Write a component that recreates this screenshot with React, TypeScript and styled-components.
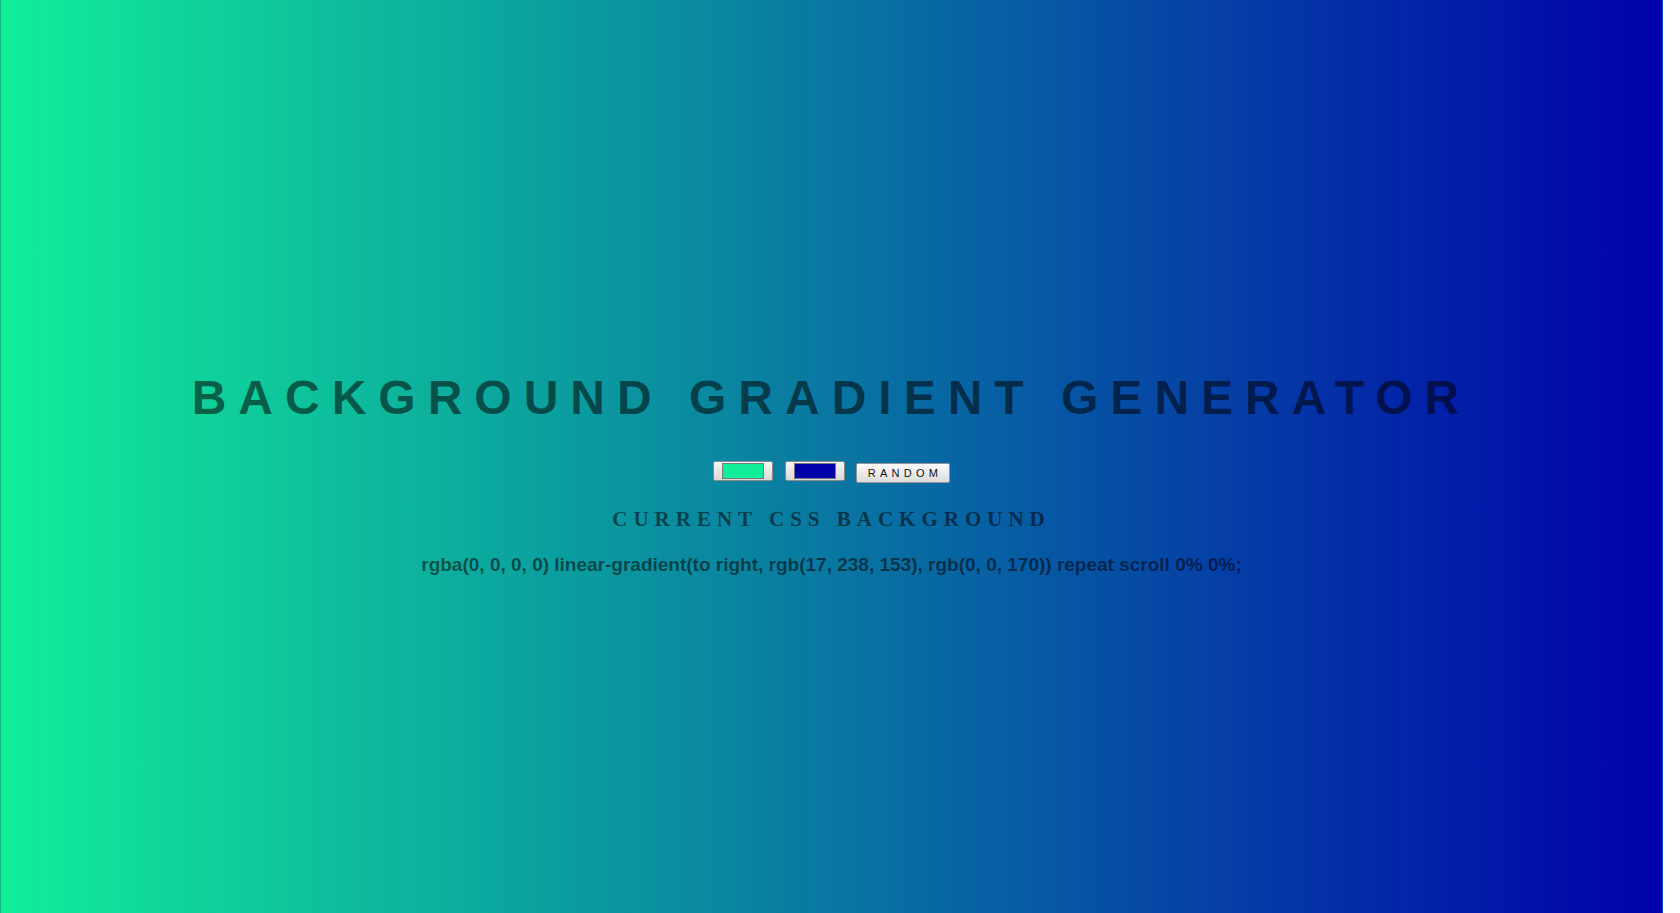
import React, { useState } from "react";
import styled, { createGlobalStyle } from "styled-components";

const GlobalStyle = createGlobalStyle`
  html, body {
    margin: 0;
    padding: 0;
    background: #ffffff;
    overflow: hidden;
  }
  * { box-sizing: border-box; }
`;

const Page = styled.main<{ $from: string; $to: string }>`
  width: calc(100vw - 17px);
  height: 913px;
  padding-top: 370px;
  border-left: 1px solid rgb(18, 184, 140);
  border-right: 1px solid rgb(10, 60, 200);
  background: linear-gradient(to right, ${(p) => p.$from}, ${(p) => p.$to});
  display: flex;
  flex-direction: column;
  align-items: center;
  color: rgba(0, 0, 0, 0.55);
`;

const Title = styled.h1`
  margin: 0;
  font-family: "Liberation Sans", Arial, sans-serif;
  font-weight: 700;
  font-size: 48px;
  line-height: 56px;
  letter-spacing: 12px;
  text-align: center;
`;

const Controls = styled.div`
  margin-top: 35px;
  display: flex;
  align-items: flex-start;
  gap: 12px;
`;

const ColorInput = styled.input`
  width: 60px;
  height: 20px;
  margin: 0;
  padding: 1px 8px;
  border: 1px solid #8a8a8a;
  border-radius: 2px;
  background: linear-gradient(#f7f7f7, #d9d9d9);
  cursor: pointer;

  &::-webkit-color-swatch-wrapper {
    padding: 0;
  }
  &::-webkit-color-swatch {
    border: 1px solid #7a7a7a;
    border-radius: 0;
  }
`;

const RandomButton = styled.button`
  margin: 2px 0 0 -1px;
  width: 94px;
  height: 20px;
  padding: 0 0 0 4px;
  border: 1px solid #959595;
  border-radius: 2px;
  background: linear-gradient(#fbfbfb, #dcdcdc);
  font-family: "Liberation Sans", Arial, sans-serif;
  font-size: 11px;
  letter-spacing: 4.3px;
  color: #111;
  cursor: pointer;
`;

const Subtitle = styled.h3`
  margin: 24px 0 0;
  font-family: "Liberation Serif", "Times New Roman", serif;
  font-weight: 700;
  font-size: 21px;
  line-height: 24px;
  letter-spacing: 6px;
  text-align: center;
`;

const CssText = styled.p`
  margin: 22px 0 0;
  font-family: "Liberation Sans", Arial, sans-serif;
  font-weight: 700;
  font-size: 19px;
  line-height: 24px;
  text-align: center;
`;

const hexToRgb = (hex: string) => {
  const n = parseInt(hex.slice(1), 16);
  return `rgb(${(n >> 16) & 255}, ${(n >> 8) & 255}, ${n & 255})`;
};

const randomHex = () =>
  "#" +
  Math.floor(Math.random() * 0xffffff)
    .toString(16)
    .padStart(6, "0");

export default function App() {
  const [c1, setC1] = useState("#11ee99");
  const [c2, setC2] = useState("#0000aa");
  const from = hexToRgb(c1);
  const to = hexToRgb(c2);

  return (
    <>
      <GlobalStyle />
      <Page $from={from} $to={to}>
        <Title>BACKGROUND GRADIENT GENERATOR</Title>
        <Controls>
          <ColorInput type="color" value={c1} onChange={(e) => setC1(e.target.value)} />
          <ColorInput type="color" value={c2} onChange={(e) => setC2(e.target.value)} />
          <RandomButton
            onClick={() => {
              setC1(randomHex());
              setC2(randomHex());
            }}
          >
            RANDOM
          </RandomButton>
        </Controls>
        <Subtitle>CURRENT CSS BACKGROUND</Subtitle>
        <CssText>
          rgba(0, 0, 0, 0) linear-gradient(to right, {from}, {to}) repeat scroll 0% 0%;
        </CssText>
      </Page>
    </>
  );
}
